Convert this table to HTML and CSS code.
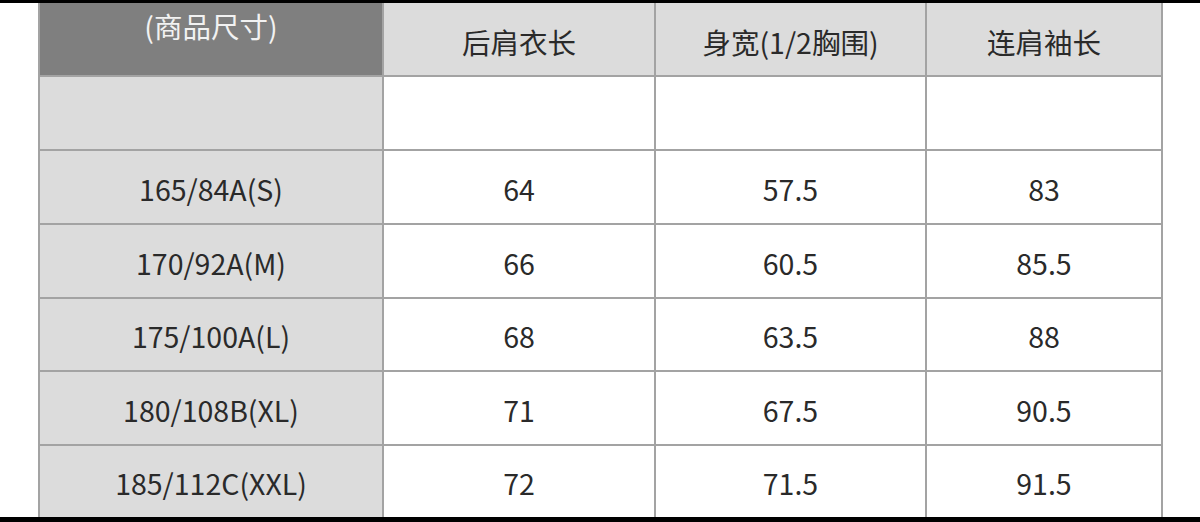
FILE: index.html
```html
<!DOCTYPE html>
<html lang="zh">
<head>
<meta charset="utf-8">
<link rel="stylesheet" href="styles.css">
</head>
<body>
<div class="frame">
  <div class="bar-top"></div>
  <div class="area">
    <div class="table">
      <div class="cell head-dark">(商品尺寸)</div>
      <div class="cell head">后肩衣长</div>
      <div class="cell head">身宽(1/2胸围)</div>
      <div class="cell head">连肩袖长</div>

      <div class="cell side r1"></div>
      <div class="cell r1"></div>
      <div class="cell r1"></div>
      <div class="cell r1"></div>

      <div class="cell side r2">165/84A(S)</div>
      <div class="cell r2">64</div>
      <div class="cell r2">57.5</div>
      <div class="cell r2">83</div>

      <div class="cell side r3">170/92A(M)</div>
      <div class="cell r3">66</div>
      <div class="cell r3">60.5</div>
      <div class="cell r3">85.5</div>

      <div class="cell side r4">175/100A(L)</div>
      <div class="cell r4">68</div>
      <div class="cell r4">63.5</div>
      <div class="cell r4">88</div>

      <div class="cell side r5">180/108B(XL)</div>
      <div class="cell r5">71</div>
      <div class="cell r5">67.5</div>
      <div class="cell r5">90.5</div>

      <div class="cell side r6">185/112C(XXL)</div>
      <div class="cell r6">72</div>
      <div class="cell r6">71.5</div>
      <div class="cell r6">91.5</div>
    </div>
  </div>
  <div class="bar-bottom"></div>
</div>
</body>
</html>
```
FILE: styles.css
```css
* { box-sizing: border-box; }
html, body { margin: 0; padding: 0; background: #ffffff; }
.frame {
  width: 1200px;
  height: 522px;
  display: flex;
  flex-direction: column;
  overflow: hidden;
}
.bar-top { height: 3px; background: #000; flex: none; }
.bar-bottom { height: 6px; background: #000; flex: none; }
.area {
  flex: 1;
  padding-left: 38px;
  display: flex;
}
.table {
  display: grid;
  grid-template-columns: 342px 270px 269px 234px;
  grid-template-rows: 72px 72px 72px 72px 71px 72px 71px;
  gap: 2px;
  padding: 0 2px;
  background: #a3a3a3;
  font-family: "Noto Sans CJK SC", "Noto Sans", sans-serif;
  font-size: 28.5px;
  color: #2a2a2a;
}
.cell {
  background: #ffffff;
  display: flex;
  align-items: center;
  justify-content: center;
  line-height: 1;
}
.head { background: #dcdcdc; padding-top: 6px; }
.head-dark {
  background: #7f7f7f;
  color: #f2f2f2;
  align-items: flex-start;
  padding-top: 9px;
}
.side { background: #dcdcdc; }
.r2, .r3, .r4, .r5, .r6 { padding-top: 4px; }
```
